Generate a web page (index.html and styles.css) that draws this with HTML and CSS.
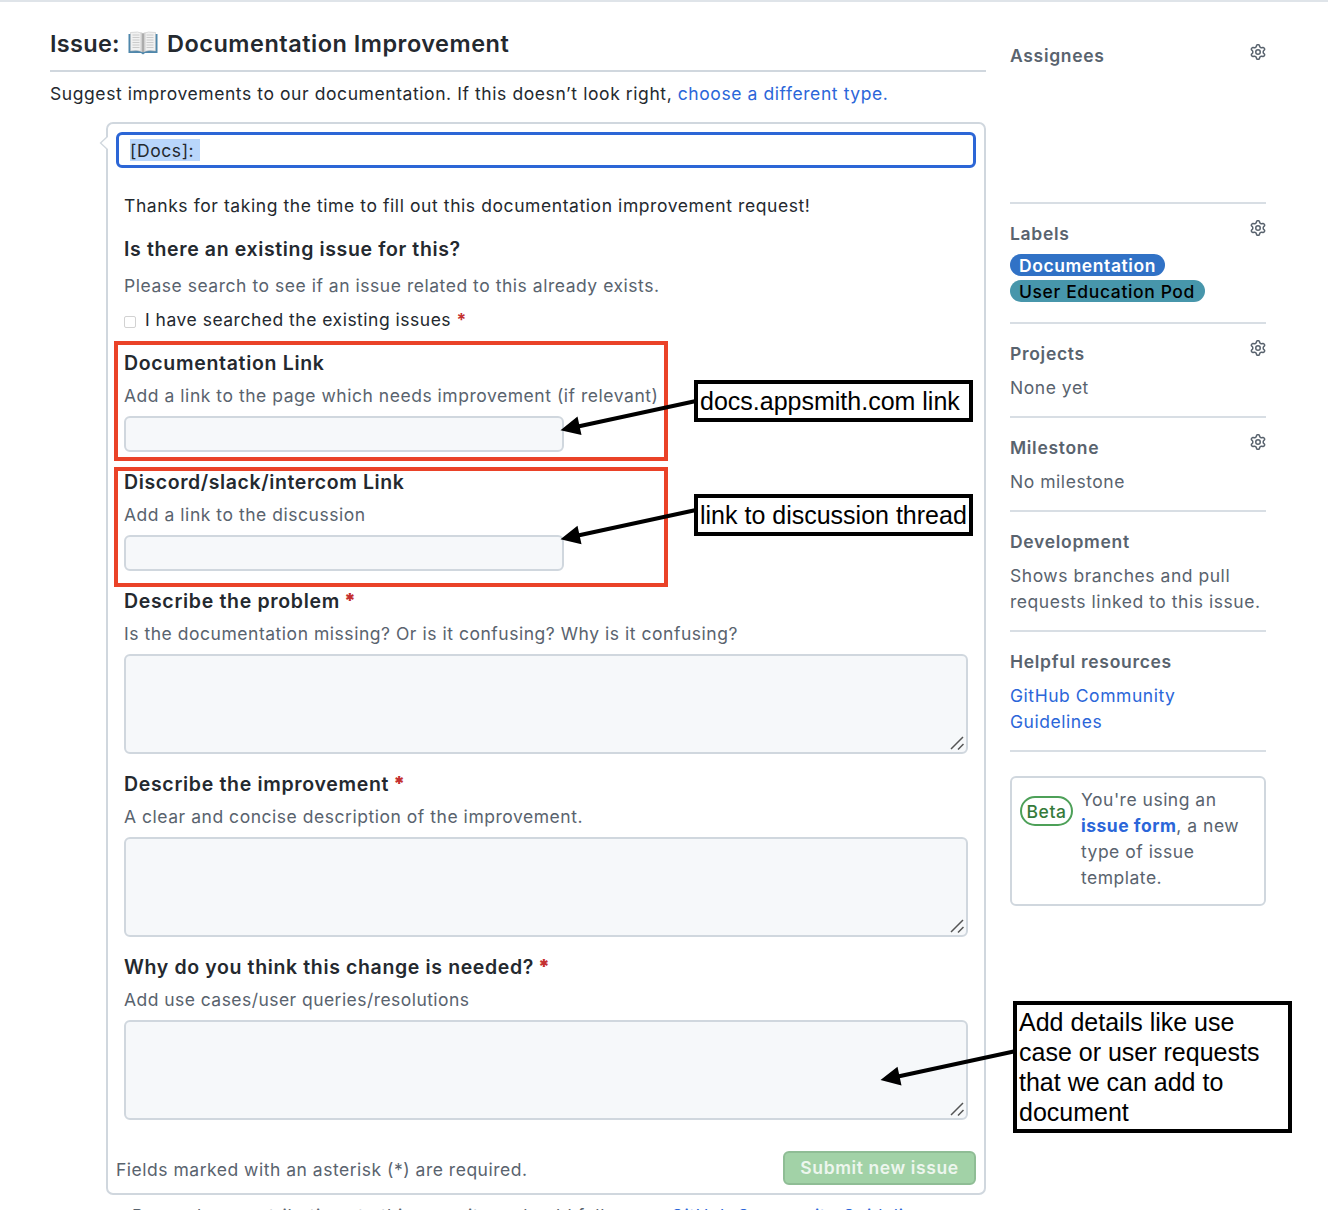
FILE: index.html
```html
<!DOCTYPE html>
<html lang="en">
<head>
<meta charset="utf-8">
<title>New issue</title>
<link rel="stylesheet" href="styles.css">
</head>
<body>
<svg class="defs" width="0" height="0">
  <symbol id="gear" viewBox="0 0 16 16"><path fill-rule="evenodd" d="M7.429 1.525a6.593 6.593 0 011.142 0c.036.003.108.036.137.146l.289 1.105c.147.56.55.967.997 1.189.174.086.341.183.501.29.417.278.97.423 1.53.27l1.102-.303c.11-.03.175.016.195.046.219.31.41.641.573.989.014.031.022.11-.059.19l-.815.806c-.411.406-.562.957-.53 1.456a4.588 4.588 0 010 .582c-.032.499.119 1.05.53 1.456l.815.806c.08.08.073.159.059.19a6.494 6.494 0 01-.573.99c-.02.029-.086.074-.195.045l-1.103-.303c-.559-.153-1.112-.008-1.529.27-.16.107-.327.204-.5.29-.449.222-.851.628-.998 1.189l-.289 1.105c-.029.11-.101.143-.137.146a6.613 6.613 0 01-1.142 0c-.036-.003-.108-.037-.137-.146l-.289-1.105c-.147-.56-.55-.967-.997-1.189a4.502 4.502 0 01-.501-.29c-.417-.278-.97-.423-1.53-.27l-1.102.303c-.11.03-.175-.016-.195-.046a6.492 6.492 0 01-.573-.989c-.014-.031-.022-.11.059-.19l.815-.806c.411-.406.562-.957.53-1.456a4.587 4.587 0 010-.582c.032-.499-.119-1.05-.53-1.456l-.815-.806c-.08-.08-.073-.159-.059-.19a6.44 6.44 0 01.573-.99c.02-.029.086-.075.195-.045l1.103.303c.559.153 1.112.008 1.529-.27.16-.107.327-.204.5-.29.449-.222.851-.628.998-1.189l.289-1.105c.029-.11.101-.143.137-.146zM8 0c-.236 0-.47.01-.701.03-.743.065-1.29.615-1.458 1.261l-.29 1.106c-.017.066-.078.158-.211.224a5.994 5.994 0 00-.668.386c-.123.082-.233.09-.3.071L3.27 2.776c-.644-.177-1.392.02-1.82.63a7.977 7.977 0 00-.704 1.217c-.315.675-.111 1.422.363 1.891l.815.806c.05.048.098.147.088.294a6.084 6.084 0 000 .772c.01.147-.038.246-.088.294l-.815.806c-.474.469-.678 1.216-.363 1.891.2.428.436.835.704 1.218.428.609 1.176.806 1.82.63l1.103-.303c.066-.019.176-.011.299.071.213.143.436.272.668.386.133.066.194.158.212.224l.289 1.106c.169.646.715 1.196 1.458 1.26a8.094 8.094 0 001.402 0c.743-.064 1.29-.614 1.458-1.26l.29-1.106c.017-.066.078-.158.211-.224a5.98 5.98 0 00.668-.386c.123-.082.233-.09.3-.071l1.102.302c.644.177 1.392-.02 1.82-.63.268-.382.505-.789.704-1.217.315-.675.111-1.422-.364-1.891l-.814-.806c-.05-.048-.098-.147-.088-.294a6.1 6.1 0 000-.772c-.01-.147.039-.246.088-.294l.814-.806c.475-.469.679-1.216.364-1.891a7.992 7.992 0 00-.704-1.218c-.428-.609-1.176-.806-1.82-.63l-1.103.303c-.066.019-.176.011-.299-.071a5.991 5.991 0 00-.668-.386c-.133-.066-.194-.158-.212-.224L10.16 1.29C9.99.645 9.444.095 8.701.031A8.094 8.094 0 008 0zm1.5 8a1.5 1.5 0 11-3 0 1.5 1.5 0 013 0zM11 8a3 3 0 11-6 0 3 3 0 016 0z"/></symbol>
  <symbol id="grip" viewBox="0 0 14 14"><path d="M1 13L13 1M8 13.5L13.5 8" fill="none" stroke="#555" stroke-width="1.5"/></symbol>
</svg>
<div class="page">
  <main class="main">
    <h1 class="title"><span class="t-issue">Issue:</span>
      <svg class="book" viewBox="0 0 30 24"><path d="M.5 3h29v19H17l-2 1.500L13 22H.5z" fill="#4f87ab"/><path d="M2.500 1.500Q10 0 15 2.500 20 0 27.500 1.500V20Q20 18.500 15 21 10 18.500 2.500 20z" fill="#f1f1f1" stroke="#bbb" stroke-width=".5"/><path d="M12.500 1.500Q14 1.500 15 2.500 16 1.500 17.500 1.500V20L15 21 12.500 20z" fill="#cfcfcf"/><path d="M15 2.500v18.500" stroke="#777" stroke-width=".8"/><path d="M4.500 4h7M4.500 6.500h7M4.500 9h7M4.500 11.500h7M4.500 14h7M4.500 16.500h7M18.500 4h7M18.500 6.500h7M18.500 9h7M18.500 11.500h7M18.500 14h7M18.500 16.500h7" stroke="#c2c2c2" stroke-width=".8"/></svg>
      <span class="t-name">Documentation Improvement</span></h1>
    <p class="intro">Suggest improvements to our documentation. If this doesn’t look right, <a>choose a different type.</a></p>
    <section class="form">
      <svg class="caret" width="9" height="16" viewBox="0 0 9 16"><path d="M9 1L1.500 8 9 15" fill="#fff" stroke="#d0d7de" stroke-width="1.300"/></svg>
      <div class="subject"><span>[Docs]:&nbsp;</span></div>
      <p class="thanks">Thanks for taking the time to fill out this documentation improvement request!</p>
      <h2 class="q q-exist">Is there an existing issue for this?</h2>
      <p class="hint hint-exist">Please search to see if an issue related to this already exists.</p>
      <div class="check"><i></i><span>I have searched the existing issues <b>*</b></span></div>
      <div class="field"><h2 class="q">Documentation Link</h2><p class="hint">Add a link to the page which needs improvement (if relevant)</p><div class="input"></div></div>
      <div class="field"><h2 class="q q-disc">Discord/slack/intercom Link</h2><p class="hint">Add a link to the discussion</p><div class="input"></div></div>
      <div class="field"><h2 class="q">Describe the problem <b>*</b></h2><p class="hint">Is the documentation missing? Or is it confusing? Why is it confusing?</p><div class="area"><svg><use href="#grip"/></svg></div></div>
      <div class="field"><h2 class="q">Describe the improvement <b>*</b></h2><p class="hint">A clear and concise description of the improvement.</p><div class="area"><svg><use href="#grip"/></svg></div></div>
      <div class="field"><h2 class="q q-why">Why do you think this change is needed? <b>*</b></h2><p class="hint hint-use">Add use cases/user queries/resolutions</p><div class="area"><svg><use href="#grip"/></svg></div></div>
      <footer class="foot"><span>Fields marked with an asterisk (*) are required.</span><div class="submit">Submit new issue</div></footer>
    </section>
    <p class="remember">Remember, contributions to this repository should follow our <a>GitHub Community Guidelines</a>.</p>
  </main>
  <aside class="side">
    <section class="block assignees"><h3>Assignees</h3><svg class="gear"><use href="#gear"/></svg></section>
    <section class="block labels"><h3>Labels</h3><svg class="gear"><use href="#gear"/></svg><div class="pills"><span class="pill blue">Documentation</span><span class="pill teal">User Education Pod</span></div></section>
    <section class="block"><h3>Projects</h3><svg class="gear"><use href="#gear"/></svg><p>None yet</p></section>
    <section class="block"><h3>Milestone</h3><svg class="gear"><use href="#gear"/></svg><p>No milestone</p></section>
    <section class="block"><h3>Development</h3><p>Shows branches and pull<br>requests linked to this issue.</p></section>
    <section class="block"><h3>Helpful resources</h3><p><a>GitHub Community<br>Guidelines</a></p></section>
    <div class="card"><span class="beta">Beta</span><p>You're using an<br><a class="strong">issue form</a>, a new<br>type of issue<br>template.</p></div>
  </aside>
</div>
<div class="mark m1"></div>
<div class="mark m2"></div>
<svg class="arrows" width="1328" height="1210" viewBox="0 0 1328 1210">
  <g stroke="#000" stroke-width="4"><path d="M696 401L578 426.500"/><path d="M696 510L578 535.500"/><path d="M1016 1051L898 1076.500"/></g>
  <path d="M560.500 430.300L577.500 416.500L581.500 435zM560.500 539.300L577.500 525.700L581.500 544.200zM880.500 1080L897.500 1066.700L901.500 1085.500z"/>
</svg>
<div class="note n1">docs.appsmith.com link</div>
<div class="note n2">link to discussion thread</div>
<div class="note n3">Add details like use<br>case or user requests<br>that we can add to<br>document</div>
</body>
</html>
```
FILE: styles.css
```css
* { box-sizing: border-box; }
html { overflow: hidden; }
body { margin: 0; height: 1210px; position: relative; overflow: hidden; background: #fff; color: #24292f; font: 17.5px/26px Inter, sans-serif; letter-spacing: .58px; }
h1, h2, h3, p { margin: 0; }
a { color: #2b66d9; }
b { color: #c4302f; }
.defs { position: absolute; }
.page { display: flex; gap: 24px; padding: 0 62px 0 50px; border-top: 2px solid #dfe4e9; height: 1210px; }
.main { width: 936px; white-space: nowrap; }
.title { display: flex; align-items: center; height: 70px; padding-top: 16px; border-bottom: 2px solid #d0d7de; font-size: 23.5px; font-weight: 600; letter-spacing: .5px; }
.t-issue { width: 70px; letter-spacing: .3px; }
.book { width: 30px; height: 24px; margin: 0 9px 2px 8px; }
.intro { height: 50px; padding-top: 9px; }
.form { position: relative; width: 880px; height: 1073px; margin-left: 56px; padding: 8px; border: 2px solid #d0d7de; border-radius: 7px; }
.caret { position: absolute; left: -9px; top: 11px; }
.subject { height: 36px; border: 3px solid #2c66d6; border-radius: 6px; padding: 4px 11px; display: flex; }
.subject span { background: #b9d6fb; height: 22px; line-height: 23px; width: 70px; }
.thanks { margin: 25px 8px 0; }
.q { display: flex; gap: 4px; font-size: 19.5px; font-weight: 600; line-height: 30px; letter-spacing: .68px; }
.q-exist, .q-why { letter-spacing: .63px; }
.q-disc { letter-spacing: .6px; }
.q-exist { margin: 15px 8px 0; }
.hint { color: #59636e; margin-top: 5px; letter-spacing: .53px; }
.hint-use { letter-spacing: .45px; }
.hint-exist { margin: 9px 8px 0; }
.check { display: flex; align-items: center; margin: 8px 8px 0; height: 26px; gap: 9px; letter-spacing: .5px; }
.check i { width: 12px; height: 12px; margin-top: 4px; border: 1px solid #d2d2d2; border-radius: 2px; }
.field { margin: 0 8px 15px; }
.check + .field { margin-top: 15px; }
.input, .area { background: #f6f8fa; border: 2px solid #d0d7de; border-radius: 6px; margin-top: 7px; }
.input { width: 440px; height: 36px; }
.area { height: 100px; display: flex; justify-content: flex-end; align-items: flex-end; padding: 2px; }
.area svg { width: 14px; height: 14px; }
.foot { display: flex; justify-content: space-between; align-items: center; margin-top: 31px; height: 34px; color: #59636e; letter-spacing: .51px; }
.foot > span { padding-top: 4px; }
.submit { width: 193px; height: 34px; border: 2px solid #8fbd95; border-radius: 6px; background: #a2d2a7; color: #edf6ee; font-weight: 600; text-align: center; line-height: 30px; letter-spacing: .6px; }
.remember { margin: 8px 0 0 82px; color: #59636e; }
.side { width: 256px; color: #59636e; white-space: nowrap; }
.block { display: grid; grid-template-columns: 1fr 16px; padding: 17px 0 15px; border-bottom: 2px solid #d8dee4; }
.block h3 { font-size: 17.5px; font-weight: 600; line-height: 26px; letter-spacing: .7px; }
.block p { grid-column: 1 / 3; margin-top: 8px; letter-spacing: .54px; }
.gear { width: 16px; height: 16px; fill: #59636e; margin-top: -1px; }
.assignees { height: 202px; padding-top: 41px; }
.assignees .gear { margin-top: 1px; }
.labels { height: 120px; grid-template-rows: 26px auto; }
.pills { grid-column: 1 / 3; display: flex; flex-direction: column; align-items: flex-start; gap: 4px; margin-top: 7px; }
.pill { height: 22px; border-radius: 11px; line-height: 23px; padding-left: 9px; font-weight: 600; }
.blue { width: 155px; background: #3172c6; color: #fff; }
.teal { width: 195px; background: #4796ab; color: #000; font-weight: 500; letter-spacing: .62px; }
.card { display: flex; gap: 8px; height: 130px; margin-top: 24px; padding: 9px 8px; border: 2px solid #d0d7de; border-radius: 6px; letter-spacing: .5px; }
.beta { width: 53px; height: 30px; margin-top: 9px; border: 2px solid #4da058; border-radius: 15px; color: #357a3b; font-weight: 500; text-align: center; line-height: 27px; }
.strong { font-weight: 700; }
.mark { position: absolute; left: 114px; width: 554px; height: 120px; border: 4px solid #ea4228; }
.m1 { top: 341px; }
.m2 { top: 467px; }
.arrows { position: absolute; left: 0; top: 0; }
.note { position: absolute; left: 694px; width: 279px; height: 42px; border: 4px solid #000; background: #fff; padding: 2px; color: #000; font: 25px/30px "Liberation Sans", sans-serif; letter-spacing: 0; white-space: nowrap; }
.n1 { top: 380px; }
.n2 { top: 494px; }
.n3 { left: 1013px; top: 1001px; height: 132px; }
```
